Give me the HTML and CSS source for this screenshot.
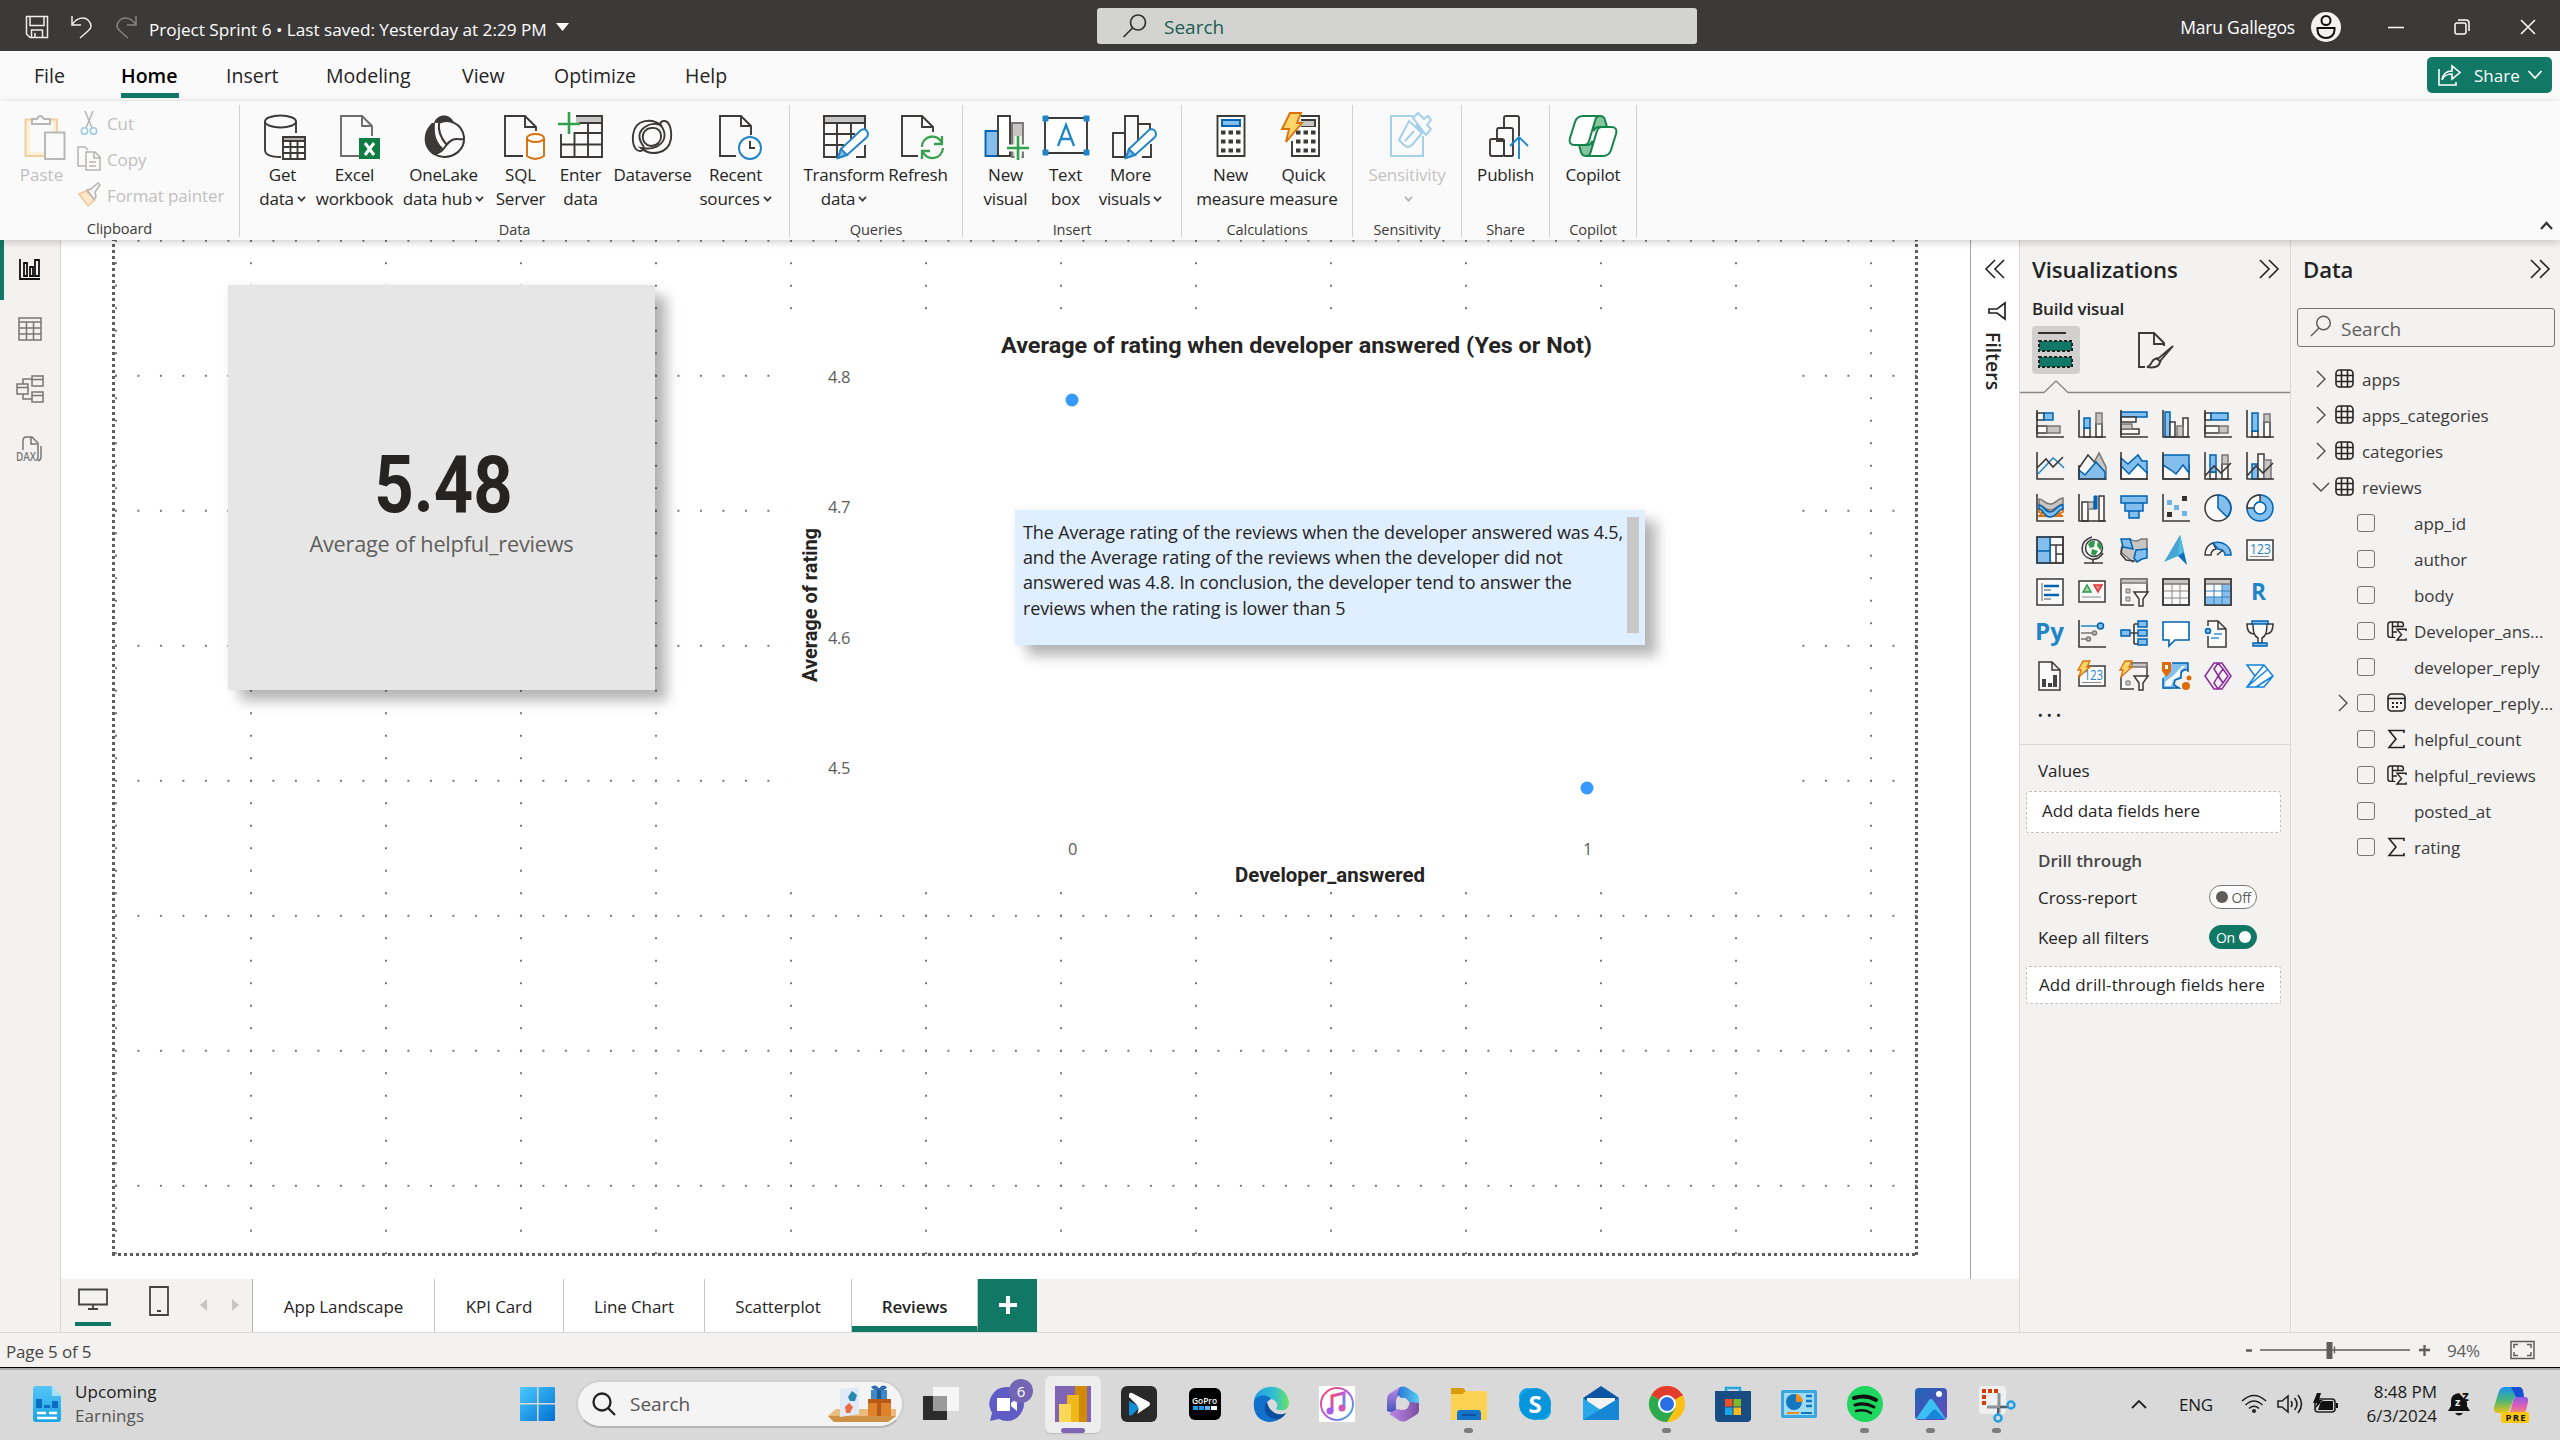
FILE: index.html
```html
<!DOCTYPE html>
<html lang="en">
<head>
<meta charset="utf-8">
<title>Project Sprint 6</title>
<link rel="stylesheet" href="styles.css">
</head>
<body>
<header class="titlebar">
  <div class="title-left">
    <svg width="24" height="24" viewBox="0 0 24 24" class="tl"><path d="M1.500 1.500h21v21H5l-3.500-3.500zM5 1.500v9h14v-9M6.500 22v-7h11v7M10 22v-4"/></svg>
    <svg width="24" height="24" viewBox="0 0 24 24" class="tl"><path d="M2 1v9h9M2 10C6 3 14 1 18 5s4 8 0 11l-8 7"/></svg>
    <svg width="24" height="24" viewBox="0 0 24 24" class="tl dim"><path d="M21 1v9h-9M21 10C17 3 9 1 5 5s-4 8 0 11l8 7"/></svg>
    <span class="doc">Project Sprint 6 • Last saved: Yesterday at 2:29 PM</span>
    <svg width="14" height="9" viewBox="0 0 14 9"><path d="M0 0h13L6.500 8z" fill="#fff"/></svg>
  </div>
  <div class="top-search">
    <svg width="26" height="26" viewBox="0 0 26 26" fill="none" stroke="#333" stroke-width="1.700"><circle cx="16" cy="9.500" r="7.500"/><path d="M10.500 15 1.500 24"/></svg>
    <span>Search</span>
  </div>
  <div class="title-right">
    <span class="user">Maru Gallegos</span>
    <svg width="30" height="30" viewBox="0 0 30 30"><circle cx="15" cy="15" r="15" fill="#f3f2f1"/><g fill="none" stroke="#111" stroke-width="2"><circle cx="15" cy="8.500" r="4.500"/><path d="M6.500 16h17v2c0 5-4 8-8.500 8s-8.500-3-8.500-8z"/></g></svg>
    <svg class="wb" width="16" height="16" viewBox="0 0 16 16"><path d="M0 8.500h16"/></svg>
    <svg class="wb" width="16" height="16" viewBox="0 0 16 16"><rect x="1" y="4" width="11" height="11" rx="2"/><path d="M4 1h8q3 0 3 3v8"/></svg>
    <svg class="wb" width="16" height="16" viewBox="0 0 16 16"><path d="m1 1 14 14M15 1 1 15"/></svg>
  </div>
</header>

<nav class="tabs">
  <span class="w1">File</span><span class="w2 active">Home</span><span class="w3">Insert</span><span class="w4">Modeling</span><span class="w5">View</span><span class="w6">Optimize</span><span class="w7">Help</span>
  <button class="share">
    <svg width="24" height="22" viewBox="0 0 24 22" fill="none" stroke="#fff" stroke-width="1.600"><path d="M1 5v16h17v-3M4 16c1-7 5-9 10-9V2l8 6.500-8 6.500v-5c-5 0-8 1-10 6z"/></svg>
    <span>Share</span>
    <svg width="16" height="10" viewBox="0 0 16 10" fill="none" stroke="#fff" stroke-width="1.700"><path d="m1.500 1 6.500 7 6.500-7"/></svg>
  </button>
</nav>

<section class="ribbon">
  <div class="group g-clip">
    <div class="clip">
      <div class="paste">
        <svg width="42" height="46" viewBox="0 0 42 46"><path d="M1.500 5.500H33V42H1.500z" fill="#fdf0d6" stroke="#f2cfa0" stroke-width="2"/><path d="M6 9h23v29H6z" fill="#fafafa"/><path d="M8 10V5h5q3-6 7 0h6v5z" fill="#fafafa" stroke="#b8b7b6" stroke-width="2"/><path d="M21 18.500h19.500V45H21z" fill="#fafafa" stroke="#b8b7b6" stroke-width="2"/></svg>
        <span>Paste</span>
      </div>
      <div class="clip-list">
        <div><svg width="24" height="26" viewBox="0 0 24 26" fill="none" stroke="#b5b4b3" stroke-width="1.500"><path d="m8 1 7 17M16 1 9 18"/><circle cx="7.500" cy="21" r="3.200" stroke="#9cc8e8"/><circle cx="16.500" cy="21" r="3.200" stroke="#9cc8e8"/></svg><span>Cut</span></div>
        <div><svg width="24" height="26" viewBox="0 0 24 26" fill="none" stroke="#b5b4b3" stroke-width="1.500"><path d="M8 20H1V1h7l3 3M9 6h9l5 5v13H9zM17 6v6h6M12 16h7M12 20h7"/></svg><span>Copy</span></div>
        <div><svg width="24" height="26" viewBox="0 0 24 26" fill="none" stroke-width="1.500"><path d="m2 12 7-3 9 9-7 6z" fill="#fde8cb" stroke="#f0c795"/><path d="m10 8 4-1 7-6 2 2-5 7 1 5-2 2z" stroke="#b5b4b3"/></svg><span>Format painter</span></div>
      </div>
    </div>
    <span class="glabel">Clipboard</span>
  </div>

  <div class="group g-data">
    <div class="btns">
      <div class="btn w60"><svg width="46" height="46" viewBox="0 0 46 46" class="k"><path d="M5 7v29c0 4 5 7 16 7M36 7v12"/><ellipse cx="20.500" cy="7.500" rx="15.500" ry="6"/><path d="M23 23h22v22H23z" fill="#fff"/><path d="M23 23h22v4H23z" fill="#b3b0ad"/><path d="M30.500 27v18M37.500 27v18M23 33h22M23 39h22"/></svg><span>Get<br>data<i></i></span></div>
      <div class="btn w84"><svg width="42" height="46" viewBox="-5 0 42 46" class="k"><path d="M21 42H2V2h21l10 10v10M23 2v10h10" stroke="#6d6b69"/><rect x="20" y="24" width="21" height="21" fill="#107c41" stroke="none"/><path d="m26 29 9 12M35 29l-9 12" stroke="#fff" stroke-width="3"/></svg><span>Excel<br>workbook</span></div>
      <div class="btn w94"><svg width="44" height="46" viewBox="0 0 44 46"><path d="M12 9C15-1 29-1 32 9Q26 6 22 7.500T12 9z" fill="#3b3a39"/><path d="M10 9C0 18 0 34 12 41q6-2 9-7C14 28 12 20 13 9z" fill="#3b3a39"/><g fill="none" stroke="#3b3a39" stroke-width="2"><path d="M17 9c9-5 23 0 25 14C43 36 32 43 22 43c-5 0-10-3-10-3 12-2 10-10 18-14 5-2 8 0 12-1M17 9c-1 8 2 15 7 21"/></g></svg><span>OneLake<br>data hub<i></i></span></div>
      <div class="btn w60"><svg width="44" height="46" viewBox="-2 0 44 46" class="k"><path d="M22 42H4V2h20l11 11v4M24 2v11h11"/><path d="M26 24v18q8 6 17 0V24" fill="#fff" stroke="#d96f0a"/><ellipse cx="34.500" cy="24" rx="8.500" ry="4" fill="#fff" stroke="#d96f0a"/></svg><span>SQL<br>Server</span></div>
      <div class="btn w60"><svg width="46" height="46" viewBox="1 0 46 46" class="k"><path d="M19 2h25v7H19z" fill="#c8c6c4" stroke="none"/><path d="M19 2h26v41H4V20M22 9h23M4 30.500h41M17.500 18v25M31 9v34M17 19h28"/><path d="M12-2v22M1 10h22" stroke="#30a14e" stroke-width="2.600"/></svg><span>Enter<br>data</span></div>
      <div class="btn w84"><svg width="44" height="46" viewBox="1 0 44 46" class="k"><path d="M21 14C35 12 34 32 21 32 10 31 10 15 21 14zM32 12c-9-8-27-8-29 9-1 11 3 16 7 16s5-4 2-7c-5-8-2-14 3-17 5-4 12-4 17-1z"/><path d="M11 34c9 8 27 7 30-9 1-11-2-18-7-18-4 0-5 4-2 6 5 8 2 15-3 18-5 4-12 4-18 3z"/></svg><span>Dataverse</span></div>
      <div class="btn w82"><svg width="44" height="46" viewBox="-4 0 44 46" class="k"><path d="M18 42H2V2h21l10 10v9M23 2v10h10"/><circle cx="32" cy="34" r="11" fill="#fff" stroke="#1f84c8"/><path d="M32 27v7h5"/></svg><span>Recent<br>sources<i></i></span></div>
    </div>
    <span class="glabel">Data</span>
  </div>

  <div class="group g-query">
    <div class="btns">
      <div class="btn w82"><svg width="46" height="46" viewBox="-1 0 46 46" class="k"><path d="M2 2h41v7H2z" fill="#c8c6c4"/><path d="M15 43H2V2h41v14M2 20h31M2 31h20M15 9v34M29 9v17M34 43h9V31"/><path d="m16 44 3-9 20-19q4-2 6 1t0 6L25 41z" fill="#fff" stroke="#1f84c8"/><path d="m16 44 3-9 6 6z" fill="#83beec" stroke="#1f84c8"/></svg><span>Transform<br>data<i></i></span></div>
      <div class="btn w66"><svg width="44" height="46" viewBox="-4 0 44 46" class="k"><path d="M18 42H2V2h20l11 11v5M22 2v11h11"/><g stroke="#36a04f" stroke-width="2.300"><path d="M22 33c0-12 16-14 20-4M42 22v8h-8M43 34c-1 12-16 13-20 4M22 45v-8h8"/></g></svg><span>Refresh</span></div>
    </div>
    <span class="glabel">Queries</span>
  </div>

  <div class="group g-insert">
    <div class="btns">
      <div class="btn w60"><svg width="46" height="46" viewBox="-1 0 46 46" class="k"><path d="M28 9h11v34H28z" fill="#c8c6c4" stroke="#797775"/><path d="M1.500 17H15v25H1.500z" fill="#83beec" stroke="#0063b1"/><path d="M14 2h12v40H14z" fill="#fff"/><path d="M34 22v24M23 34h22" stroke="#fafafa" stroke-width="7"/><path d="M34 22v24M23 34h22" stroke="#30a14e" stroke-width="2.600"/></svg><span>New<br>visual</span></div>
      <div class="btn w60"><svg width="48" height="46" viewBox="0 0 48 46" class="k"><path d="M3 4h42v35H3z" fill="#fff"/><path d="M1 2h5v5H1zM42 2h5v5h-5zM1 36h5v5H1zM42 36h5v5h-5z" fill="#1f84c8" stroke="#1f84c8" stroke-width="1"/><path d="m16 32 8-21 8 21M19 25h10" stroke="#1f84c8" stroke-width="2.300"/></svg><span>Text<br>box</span></div>
      <div class="btn w70"><svg width="46" height="46" viewBox="-3 0 46 46" class="k"><path d="M2 19h12v24H2z"/><path d="M14 43V2h13v26M27 10h12v9M31 43h9V30" /><path d="m15 44 3-9 20-19q4-2 6 1t0 6L24 41z" fill="#fff" stroke="#1f84c8"/><path d="m15 44 3-9 6 6z" fill="#83beec" stroke="#1f84c8"/></svg><span>More<br>visuals<i></i></span></div>
    </div>
    <span class="glabel">Insert</span>
  </div>

  <div class="group g-calc">
    <div class="btns">
      <div class="btn w72"><svg width="30" height="46" viewBox="0 0 30 46" class="k"><path d="M1.500 2h27v40h-27z" fill="#fff"/><path d="M6 6h18v6H6z" fill="#83beec" stroke="#0063b1"/><path d="M5 18.500h20M5 27.500h20M5 36.500h20" stroke-width="4" stroke-dasharray="4.500 3"/></svg><span>New<br>measure</span></div>
      <div class="btn w74"><svg width="46" height="46" viewBox="0 0 46 46" class="k"><path d="M20 2h18v40H11V27M20 6h14v6H20" fill="#fff"/><path d="M18 7h15v5H18z" fill="#c8c6c4" stroke="none"/><path d="M15 18.500h20M15 27.500h20M15 36.500h20" stroke-width="4" stroke-dasharray="4.500 3"/><path d="M9-1h11l-4 10h5L5 28l3-13H1z" fill="#fdd36a" stroke="#d9720b"/></svg><span>Quick<br>measure</span></div>
    </div>
    <span class="glabel">Calculations</span>
  </div>

  <div class="group g-sens">
    <div class="btns">
      <div class="btn w90 off"><svg width="46" height="46" viewBox="-3 0 46 46" fill="none" stroke="#a5d0ea" stroke-width="2"><path d="M26 2H4v40h32V22"/><path d="m22 7 13 12-10 12q-4 4-8 0l-5-5zM26 4l5-5 6 6 4-3 3 4-4 5 4 4-5 6zM18 27l9-10M29 11l9 9" /></svg><span>Sensitivity<br><i></i></span></div>
    </div>
    <span class="glabel">Sensitivity</span>
  </div>
  <div class="group g-share">
    <div class="btns">
      <div class="btn w70"><svg width="46" height="46" viewBox="-4 0 46 46" class="k"><rect x="3" y="25" width="14" height="17" rx="2"/><path d="M17 42V27H10V16q0-2 2-2h12q2 0 2 2v26M17 14V4q0-2 2-2h11q2 0 2 2v18M17 42h9"/><path d="M32 45V23M23 32l9-9 9 9" stroke="#1f84c8"/></svg><span>Publish</span></div>
    </div>
    <span class="glabel">Share</span>
  </div>
  <div class="group g-cop">
    <div class="btns">
      <div class="btn w70"><svg width="50" height="46" viewBox="0 0 50 46" fill="#fff" stroke="#13854a" stroke-width="2"><path d="M24 2h8q4 0 5 4l2 7h-8q-4 0-5 4zM26 42h-8q-4 0-5-4l-2-7h8q4 0 5-4z" fill="#86c4a0"/><path d="M32 2H15Q9 2 7 8L2 24q-2 7 5 7h9q4 0 5-4l6-20q1-5 5-5z"/><path d="M18 42h17q6 0 8-6l5-16q2-7-5-7h-9q-4 0-5 4l-6 20q-1 5-5 5z"/></svg><span>Copilot</span></div>
    </div>
    <span class="glabel">Copilot</span>
  </div>
  <svg class="collapse" width="13" height="9" viewBox="0 0 13 9"><path d="m1 8 5.500-6L12 8" fill="none" stroke="#333" stroke-width="2.200"/></svg>
</section>

<main class="work">
  <aside class="rail">
    <div class="rail-item on"><svg width="24" height="24" viewBox="0 0 24 24" fill="none" stroke="#111" stroke-width="1.800"><path d="M2 2v20h20M6 19V6h3v13zM12 19v-9h3v9zM17 19V3h4v16z"/></svg></div>
    <div class="rail-item"><svg width="26" height="26" viewBox="0 0 26 26"><path d="M2 2h22v22H2zM2 6h22M2 12h22M2 18h22M9.500 6v18M16.500 6v18"/></svg></div>
    <div class="rail-item"><svg width="28" height="30" viewBox="0 0 28 30"><path d="M1 10h11v10H1zM1 13.500h11M16 2h11v10H16zM16 5.500h11M16 18h11v10H16zM16 21.500h11M7 10V5h9M7 20v5h9"/></svg></div>
    <div class="rail-item"><svg width="28" height="28" viewBox="0 0 28 28"><path d="M7 15V6q0-4 3-4h6l6 6v14q0 3-2 3M15 2v7h6M25 11v11q0 3-3 4"/><text x="0" y="26" textLength="20" lengthAdjust="spacingAndGlyphs">DAX</text></svg></div>
  </aside>

  <section class="center">
    <div class="stage">
      <div class="page">
        <div class="card"><b>5.48</b><span>Average of helpful_reviews</span></div>
        <svg class="scatter" width="1012" height="572" viewBox="790 318 1012 572">
          <g class="din">
            <text x="1001" y="353" font-size="21.500" textLength="591" lengthAdjust="spacingAndGlyphs">Average of rating when developer answered (Yes or Not)</text>
            <text x="1235" y="882" font-size="20" textLength="190" lengthAdjust="spacingAndGlyphs">Developer_answered</text>
            <text transform="translate(817 682) rotate(-90)" font-size="20" textLength="154" lengthAdjust="spacingAndGlyphs">Average of rating</text>
          </g>
          <g class="tick">
            <text x="828" y="383">4.8</text><text x="828" y="513">4.7</text><text x="828" y="644">4.6</text><text x="828" y="774">4.5</text>
            <text x="1068" y="855">0</text><text x="1583" y="855">1</text>
          </g>
          <circle cx="1072" cy="400" r="6.500" fill="#3599ff"/><circle cx="1587" cy="788" r="6.500" fill="#3599ff"/>
        </svg>
        <div class="note"><p>The Average rating of the reviews when the developer answered was 4.5,<br>and the Average rating of the reviews when the developer did not<br>answered was 4.8. In conclusion, the developer tend to answer the<br>reviews when the rating is lower than 5</p><div class="thumb"></div></div>
      </div>
    </div>
    <aside class="filters">
      <svg width="20" height="20" viewBox="0 0 20 20" class="chev"><path d="m10 1-9 9 9 9M19 1l-9 9 9 9"/></svg>
      <svg class="funnel" width="18" height="18" viewBox="0 0 18 18"><path d="M17 1v16l-8-6H1V7h8z" fill="none" stroke="#222" stroke-width="1.700"/></svg>
      <span>Filters</span>
    </aside>
    <footer class="pagebar">
      <div class="views">
        <svg width="30" height="24" viewBox="0 0 30 24"><path d="M1 2h28v15H1zM15 17v4M10 21.500h10"/></svg>
        <svg width="20" height="32" viewBox="0 0 20 32"><path d="M1 2h18v28H1zM8 26h4"/></svg>
        <b class="tri l"></b><b class="tri r"></b>
      </div>
      <span class="pt p1">App Landscape</span><span class="pt p2">KPI Card</span><span class="pt p3">Line Chart</span><span class="pt p4">Scatterplot</span><span class="pt p5">Reviews</span>
      <span class="plus"><svg width="18" height="18" viewBox="0 0 18 18"><path d="M9 0v18M0 9h18" stroke="#fff" stroke-width="4"/></svg></span>
    </footer>
  </section>

  <aside class="viz">
    <div class="phead"><h2>Visualizations</h2><svg width="20" height="20" viewBox="0 0 20 20" class="chev"><path d="m1 1 9 9-9 9M10 1l9 9-9 9"/></svg></div>
    <h3>Build visual</h3>
    <div class="modes">
      <span class="mode"><svg width="36" height="38" viewBox="0 0 36 38"><path d="M0 2h28" stroke="#222" stroke-width="1.800"/><path d="M1 10h33v10H1zM1 26h33v10H1z" fill="#117865" stroke="#222" stroke-width="2" stroke-dasharray="3 2"/></svg></span>
      <svg width="38" height="38" viewBox="0 0 38 38" class="k"><path d="M8 36H2V2h15l10 10v3M17 2v11h10" /><path d="M36 15 22 27l-4 1c-4 1-3 7-8 8 6 1 12 0 13-5l1-2z"/><path d="m19 27 5 4"/></svg>
    </div>
    <svg class="notch" width="270" height="14" viewBox="0 0 270 14"><path d="M0 12.500h24L36 1l12 11.500h222" fill="none" stroke="#8a8886" stroke-width="1.300"/></svg>

    <div class="vgrid">
      <svg viewBox="0 0 28 28"><path class="w" d="M1 3h7v7H1zM1 16h10v7H1z"/><path class="b" d="M8 3h9v7H8z"/><path class="g" d="M11 16h13v7H11z"/><path class="x" d="M1 0v27h27"/></svg>
      <svg viewBox="0 0 28 28"><path class="w" d="M6 18h6v9H6zM18 13h6v14h-6z"/><path class="b" d="M6 8h6v10H6z"/><path class="g" d="M18 3h6v11h-6z"/><path class="x" d="M1 0v27h27"/></svg>
      <svg viewBox="0 0 28 28"><path class="b" d="M1 2h26v5H1z"/><path class="w" d="M1 7h15v5H1zM1 19h18v5H1z"/><path class="g" d="M1 14h11v5H1z"/><path class="x" d="M1 0v27h27"/></svg>
      <svg viewBox="0 0 28 28"><path class="b" d="M3 2h5v25H3z"/><path class="w" d="M8 12h5v15H8zM21 8h5v19h-5z"/><path class="g" d="M15 16h6v11h-6z"/><path class="x" d="M1 0v27h27"/></svg>
      <svg viewBox="0 0 28 28"><path class="w" d="M1 3h6v7H1zM1 16h14v7H1z"/><path class="b" d="M7 3h17v7H7z"/><path class="g" d="M15 16h9v7h-9z"/><path class="x" d="M1 0v27h27"/></svg>
      <svg viewBox="0 0 28 28"><path class="w" d="M6 21h6v6H6zM18 12h6v15h-6z"/><path class="b" d="M6 3h6v18H6z"/><path class="g" d="M18 4h6v8h-6z"/><path class="x" d="M1 0v27h27"/></svg>

      <svg viewBox="0 0 28 28"><path class="bl" d="m2 22 15-16 5 4 6 6"/><path class="x" d="m1 16 9-9 7 8 10-10M1 0v27h27"/></svg>
      <svg viewBox="0 0 28 28"><path class="g" d="M13 16 21 1l7 14v12z"/><path class="w" d="m1 16 9-13 9 10-12 13H1z"/><path class="b" d="m1 18 6 5 11-13 9 10v7H1z"/><path class="x" d="M1 13v14h27"/></svg>
      <svg viewBox="0 0 28 28"><path class="w" d="m1 12 7 8 10-8 9 8v7H1z" stroke="none"/><path class="b" d="m1 6 7 6 10-9 4 6h5v12l-9-9-9 10-8-8z"/><path class="x" d="M1 0v27h27"/></svg>
      <svg viewBox="0 0 28 28"><path class="w" d="M1 12h26v15H1z" stroke="none"/><path class="b" d="M1 3h26v18l-6-8-7 9-5-4-8-5z"/><path class="x" d="M1 0v27h27"/></svg>
      <svg viewBox="0 0 28 28"><path class="w" d="M6 20h6v7H6zM18 12h6v15h-6z"/><path class="b" d="M6 3h6v17H6z"/><path class="g" d="M18 3h6v9h-6z"/><path class="x" d="m1 24 9-10 7 7 10-10M1 0v27h27"/></svg>
      <svg viewBox="0 0 28 28"><path class="b" d="M6 12h6v15H6z"/><path class="w" d="M12 2h6v25h-6z"/><path class="g" d="M18 8h7v19h-7z"/><path class="x" d="m1 24 9-10 7 7 10-10M1 0v27h27"/></svg>

      <svg viewBox="0 0 28 28"><path d="M3 15h6l5 3 6-3h7v3l-5 2 5 2H3l4-3-4-1z" fill="#fbd39a" stroke="#e0700a" stroke-width="1.800"/><path class="g" d="M3 5c5 0 5 5 11 5s8-6 13-6v6c-5 0-7 6-13 6S8 11 3 11z"/><path class="b" d="M3 11c5 0 5 7 11 7s6-7 13-7v4c-5 0-6 8-13 8S8 15 3 15z"/><path class="x" d="M1 0v27h27"/></svg>
      <svg viewBox="0 0 28 28"><path class="w" d="M4 8h6v19H4zM21 2h5v25h-5z"/><path class="g" d="M10 8h6v7h-6z"/><path d="M16 2h3v13h-3z" fill="#0063b1" stroke="#0063b1"/><path class="x" d="M1 0v27h27"/></svg>
      <svg viewBox="0 0 28 28"><path class="b" d="M1 2h26v7H1zM5 9h18v8H5zM9 17h10v7H9z"/></svg>
      <svg viewBox="0 0 28 28"><path fill="#6db3ea" d="M5 6h5v5H5zM12 11h5v5h-5zM20 17h5v5h-5z"/><path fill="#333" d="M20 2h5v5h-5zM5 18h5v5H5z"/><path class="x" d="M1 0v27h27"/></svg>
      <svg viewBox="0 0 28 28"><circle class="w" cx="14" cy="14" r="13"/><path class="b" d="M14 1a13 13 0 0 1 9 22l-9-9z"/></svg>
      <svg viewBox="0 0 28 28"><circle class="b" cx="14" cy="14" r="13"/><path class="w" stroke="#797775" d="M1 14A13 13 0 0 1 14 1v7a6 6 0 0 0-6 6z"/><circle cx="14" cy="14" r="6" fill="#f8f8f8" stroke="#0063b1" stroke-width="1.500"/></svg>

      <svg viewBox="0 0 28 28"><path class="w" d="M14 1h13v26H14zM14 9h13M20 9v18M20 18h7"/><path class="b" d="M1 1h13v26H1zM1 15h13"/><path class="x" d="M1 1h26v26H1z"/></svg>
      <svg viewBox="0 0 28 28"><path class="x" d="M14 1C1 5 1 20 13 23c5 1 9-1 12-6M6 27h19M15 23v4"/><circle class="w" cx="16" cy="12" r="8.500"/><path d="M10 8q3-4 7-3l-1 6-4 1zM14 13l6 2-3 5-4-2zM20 5l4 5-1 5-4-5z" fill="#2e9a4b"/></svg>
      <svg viewBox="0 0 28 28"><path class="g" d="M10 3q6 4 11 0h6v11l-5 8-9 4-5-4-7-6 1-6h9z"/><path class="b" d="M1 3h9l3 10-5-1-5-1zM16 14l11-1v9l-5 1-5 3-3-4z"/><path class="x" d="m2 11-1 7 5 6 8 1"/></svg>
      <svg viewBox="0 0 28 28"><path d="M18-1 2 26l14-6z" fill="#45a6d6"/><path d="m18-1 7 30-9-9z" fill="#0a6ebd"/><path d="m18-1 4 17-6 4z" fill="#54bde0"/></svg>
      <svg viewBox="0 0 28 28"><path class="w" d="M1 19C1 12 5 8 9 7l3 6q-5 1-5 6z"/><path class="b" d="M9 7c9-3 18 3 18 12h-6q0-5-7-6z"/><path class="x" d="m13 19 6-5" stroke-width="3"/></svg>
      <svg viewBox="0 0 28 28"><path class="w" d="M1 4h26v20H1z"/><path d="M4 20.500h19" stroke="#888"/><text x="4" y="18" font-size="14" textLength="21" lengthAdjust="spacingAndGlyphs">123</text></svg>

      <svg viewBox="0 0 28 28"><path class="w" d="M1 1h26v26H1z"/><path d="M6 5v18M8 12h7M8 21h7" stroke="#888" stroke-width="1.300"/><path d="M8 8h15M8 17h15" stroke="#0063b1" stroke-width="2.500"/></svg>
      <svg viewBox="0 0 28 28"><path class="w" d="M1 3h26v21H1z"/><path d="m5 14 4-7 4 7z" fill="#9cd5a5" stroke="#2e9a4b" stroke-width="1.500"/><path d="m16 7 4 7 4-7z" fill="#ee8080" stroke="#d33" stroke-width="1.500"/><path d="M4 19h19" stroke="#888"/></svg>
      <svg viewBox="0 0 28 28"><path class="w" d="M1 1h26v13M14 27H1V1"/><path class="g" d="M1 1h26v4H1z"/><path d="M6 11h4v4H6zM6 19h4v4H6z" fill="#ccc" stroke="#777"/><path class="w" d="M14 14h14l-5 7v7h-4v-7z"/></svg>
      <svg viewBox="0 0 28 28"><path class="w" d="M1 1h26v26H1z"/><path class="g" d="M1 1h26v5H1z"/><path d="M10 6v21M18 6v21M1 13h26M1 20h26" stroke="#888"/><path class="x" d="M1 1h26v26H1z"/></svg>
      <svg viewBox="0 0 28 28"><path class="w" d="M1 1h26v26H1z"/><path fill="#83beec" d="M18 6h9v21H1v-8h17z"/><path d="M10 6v21M18 6v21M1 13h26M1 19h26" stroke="#3a83bd"/><path class="g" d="M1 1h26v5H1z"/><path class="x" d="M1 1h26v26H1z"/></svg>
      <svg viewBox="0 0 28 28"><text x="5" y="22" font-size="24" font-weight="700" textLength="15" lengthAdjust="spacingAndGlyphs">R</text></svg>

      <svg viewBox="0 0 28 28"><text x="-1" y="20" font-size="24" font-weight="700" textLength="29" lengthAdjust="spacingAndGlyphs">Py</text></svg>
      <svg viewBox="0 0 28 28"><path class="bl" d="M3 6h16"/><circle class="b" cx="22.500" cy="6" r="3"/><path d="M3 13h11M3 19h6" stroke="#797775" stroke-width="1.500"/><circle class="g" cx="16.500" cy="13" r="2"/><circle class="g" cx="10.500" cy="19" r="2"/><path class="x" d="M1 0v27h27"/></svg>
      <svg viewBox="0 0 28 28"><path class="x" d="M9 13h9M14 4v20M14 4h4M14 24h4"/><path class="b" d="M1 10h9v6H1zM18 1h9v6h-9zM18 10h9v6h-9zM18 19h9v6h-9z"/></svg>
      <svg viewBox="0 0 28 28"><path d="M1 2h26v18H13l-6 6v-6H1z" fill="#fff" stroke="#0063b1" stroke-width="1.600"/></svg>
      <svg viewBox="0 0 28 28"><path class="w" d="M4 6V1h10l8 8v18H4V16M14 1v8h8"/><circle class="b" cx="4" cy="11" r="2.500"/><path d="M10 14h8M7 18h8" stroke="#3a93d5" stroke-width="1.500"/></svg>
      <svg viewBox="0 0 28 28"><path class="x" d="M7 4H1c0 7 3 10 7 10M21 4h6c0 7-3 10-7 10"/><path class="w" d="M7 2h14c0 10-1 14-5 16v5h-4v-5C8 16 7 12 7 2z"/><path class="b" d="M6 1h16v3H6zM7 23h14v3H7z"/></svg>

      <svg viewBox="0 0 28 28"><path class="w" d="M3 0h13l8 8v20H3zM16 0v8h8"/><path fill="#444" d="M6 17h4v8H6zM12 21h4v4h-4zM17 13h4v12h-4z"/></svg>
      <svg viewBox="0 0 28 28"><path class="w" d="M10 4h17v20H1V13"/><path d="M4 20.500h19" stroke="#888"/><text x="6" y="18" font-size="14" textLength="19" lengthAdjust="spacingAndGlyphs">123</text><path class="o" d="M5-1h7L9 5h3L1 15l2-7H0z"/></svg>
      <svg viewBox="0 0 28 28"><path class="w" d="M9 1h18v13M14 27H1V15"/><path class="g" d="M12 1h15v4H12z"/><path d="M6 19h4v4H6z" fill="#ccc" stroke="#777"/><path class="w" d="M14 14h14l-5 7v7h-4v-7z"/><path class="o" d="M5-1h7L9 5h3L1 15l2-7H0z"/></svg>
      <svg viewBox="0 0 28 28"><path d="M1 16h8v11H1z" fill="#83beec"/><path d="M10 1h16v7q-6-1-7 4v4l-6 2-1 5 5 3H1V16M26 1v9" fill="#83beec" stroke="#0063b1" stroke-width="1.500"/><path d="m3 20 9-7 8-9h4l-6 4v6l-7 4-2 6H3z" fill="#f7fafd"/><path d="M0 0h9v9l-4.500 6L0 9z" fill="#df6b05"/><rect x="3" y="3" width="3" height="4" fill="#fff"/><circle cx="24" cy="24" r="4" fill="#df6b05"/><circle cx="27" cy="16" r="2.500" fill="#df6b05"/></svg>
      <svg viewBox="0 0 28 28" fill="none" stroke="#8b2a9b" stroke-width="1.500"><path d="M10 1h4l5 6-5 7 5 7-5 6h-4L1 14zM14 1h4l9 13-9 13h-4M19 7l5 7-5 7M14 14l5-7M14 14l5 7M14 1l-4 6 9 14M14 27l-4-6 4-7"/></svg>
      <svg viewBox="0 0 28 28" fill="#fff" stroke="#1182dd" stroke-width="1.500"><path d="M1 3h17l9 11-9 11H1l8-11zM9 14 18 3M2 24 21 8M10 25 27 14" /></svg>
      <b class="dots">...</b>
    </div>

    <div class="wells">
      <p class="wl">Values</p>
      <div class="drop d1">Add data fields here</div>
      <p class="wl strong">Drill through</p>
      <div class="trow">Cross-report<span class="toggle"><i></i>Off</span></div>
      <div class="trow">Keep all filters<span class="toggle on">On<i></i></span></div>
      <div class="drop d2">Add drill-through fields here</div>
    </div>
  </aside>

  <aside class="data">
    <div class="phead"><h2>Data</h2><svg width="20" height="20" viewBox="0 0 20 20" class="chev"><path d="m1 1 9 9-9 9M10 1l9 9-9 9"/></svg></div>
    <div class="dsearch"><svg width="22" height="22" viewBox="0 0 22 22" fill="none" stroke="#605e5c" stroke-width="1.500"><circle cx="13.500" cy="8" r="6.800"/><path d="M9 13 1 21"/></svg><span>Search</span></div>
    <svg class="defs" width="0" height="0">
      <symbol id="tbl" viewBox="0 0 20 20"><rect x="1" y="1" width="17" height="17" rx="3.500"/><path d="M6.500 1v17M12.500 1v17M1 6.500h17M1 12.500h17"/></symbol>
      <symbol id="sum" viewBox="0 0 20 20"><path d="M17 4V1.500H2l7 8.500-7 8.500h15V16"/></symbol>
      <symbol id="msr" viewBox="0 0 22 22"><path d="M9 18H4q-3 0-3-3V4q0-3 3-3h11q3 0 3 3v2M6 1v17M12 1v6M6 6h12M6 12h5M21 11v-2H11l5 6-5 6h10v-2"/></symbol>
      <symbol id="cal" viewBox="0 0 20 20"><rect x="1" y="1" width="17" height="17" rx="3.500"/><path d="M1 5.500h17"/><path d="M5 10h2M9 10h2M13 10h2M5 14h2M9 14h2" stroke-width="2"/></symbol>
    </svg>
    <div class="tree">
      <div class="row"><svg class="car" viewBox="0 0 10 18"><path d="m1 1 8 8-8 8"/></svg><svg class="ic"><use href="#tbl"/></svg>apps</div>
      <div class="row"><svg class="car" viewBox="0 0 10 18"><path d="m1 1 8 8-8 8"/></svg><svg class="ic"><use href="#tbl"/></svg>apps_categories</div>
      <div class="row"><svg class="car" viewBox="0 0 10 18"><path d="m1 1 8 8-8 8"/></svg><svg class="ic"><use href="#tbl"/></svg>categories</div>
      <div class="row"><svg class="car open" viewBox="0 0 18 10"><path d="m1 1 8 8 8-8"/></svg><svg class="ic"><use href="#tbl"/></svg>reviews</div>
      <div class="row f"><i class="cb"></i><svg class="ic"></svg>app_id</div>
      <div class="row f"><i class="cb"></i><svg class="ic"></svg>author</div>
      <div class="row f"><i class="cb"></i><svg class="ic"></svg>body</div>
      <div class="row f"><i class="cb"></i><svg class="ic"><use href="#msr"/></svg>Developer_ans...</div>
      <div class="row f"><i class="cb"></i><svg class="ic"></svg>developer_reply</div>
      <div class="row f x2"><svg class="car" viewBox="0 0 10 18"><path d="m1 1 8 8-8 8"/></svg><i class="cb"></i><svg class="ic"><use href="#cal"/></svg>developer_reply...</div>
      <div class="row f"><i class="cb"></i><svg class="ic"><use href="#sum"/></svg>helpful_count</div>
      <div class="row f"><i class="cb"></i><svg class="ic"><use href="#msr"/></svg>helpful_reviews</div>
      <div class="row f"><i class="cb"></i><svg class="ic"></svg>posted_at</div>
      <div class="row f"><i class="cb"></i><svg class="ic"><use href="#sum"/></svg>rating</div>
    </div>
  </aside>
</main>

<div class="status">
  <span>Page 5 of 5</span>
  <div class="zoom">
    <svg width="184" height="20" viewBox="0 0 184 20"><path d="M0 10.500h6M173 10h11M178.500 5v11" stroke="#605e5c" stroke-width="2.300"/><path d="M14 10h150M88.500 6.500v7" stroke="#605e5c" stroke-width="1.300"/><path d="M80.500 2h6v17h-6z" fill="#605e5c"/></svg>
    <span>94%</span>
    <svg width="26" height="20" viewBox="0 0 26 20" fill="none" stroke="#605e5c" stroke-width="1.500"><path d="M1 1.500h23v17H1zM4 8V4.500h4M17 4.500h4V8M21 12v3.500h-4M8 15.500H4V12"/></svg>
  </div>
</div>

<footer class="taskbar">
  <div class="weather">
    <svg width="28" height="36" viewBox="0 0 28 36"><defs><linearGradient id="wg" x2="0" y2="1"><stop stop-color="#55c4f8"/><stop offset="1" stop-color="#1ba4e2"/></linearGradient></defs><path d="M3 0h16l9 10v23q0 3-3 3H3q-3 0-3-3V3q0-3 3-3z" fill="url(#wg)"/><path d="m19 0 9 10h-9z" fill="#a5e0fc"/><path d="M3 13h6v9H3zM11 19h6v3h-6zM19 15h6v7h-6z" fill="#0a6cc2"/><path d="M4 27h9M16 27h8M4 32h20" stroke="#fff" stroke-width="2.500"/></svg>
    <p>Upcoming<br><span>Earnings</span></p>
  </div>
  <svg class="start" width="36" height="36" viewBox="0 0 36 36"><defs><linearGradient id="sg" x2="1" y2="1"><stop stop-color="#4ccbff"/><stop offset="1" stop-color="#006fd2"/></linearGradient></defs><path d="M0 2q0-1 1-1h16v16H0zM18.500 1H34q1 0 1 1v15H18.500zM0 18.500h17V35H1q-1 0-1-1zM18.500 18.500H35V34q0 1-1 1H18.500z" fill="url(#sg)"/></svg>
  <div class="tsearch">
    <svg width="24" height="24" viewBox="0 0 24 24" fill="none" stroke="#222" stroke-width="2.300"><circle cx="10" cy="10" r="8.500"/><path d="m16 16 7 7"/></svg>
    <span>Search</span>
    <svg width="70" height="38" viewBox="0 0 70 38"><path d="M0 31 8 24h60v7l-8 6H6z" fill="#e9bb7c"/><path d="M0 31h68l-8 6H6z" fill="#cf9146"/><path d="m12 4 19-2v27l-19 3z" fill="#dfe9f8"/><path d="m17 22 4-4 4 4-3 6h-4z" fill="#ee6b3a"/><path d="m20 12 4-6 5 4-2 6h-5z" fill="#2a8aae"/><path d="M40 14h23v17H40z" fill="#e0812b"/><path d="M40 14h23v4H40zM49 18h4v13h-4z" fill="#b75a18"/><path d="M43 5h16v9H43z" fill="#3d88c6"/><path d="M49 3h4v11h-4z" fill="#1e5b94"/><path d="M43 2q5-4 8 2 3-6 8-2-2 4-8 3-5 1-8-3z" fill="#2d6fae"/></svg>
  </div>
  <div class="apps">
    <span><svg viewBox="0 0 36 36"><path d="M0 10h24v24H0z" fill="#2c2c2c"/><path d="M10 1h26v24H10z" fill="#f5f5f5"/><path d="M10 10h14v15H10z" fill="#9a9a9a"/></svg></span>
    <span><svg viewBox="0 0 36 36"><path d="M17 1a17 17 0 1 1-7 32L1 35l2-8A17 17 0 0 1 17 1z" fill="#5f5cc5"/><path d="M8 12h13v13H8zM22 17l6-5v13l-6-5z" fill="#fff"/></svg><em>6</em></span>
    <span class="cur"><svg viewBox="0 0 36 36"><path d="M0 0h36v36H0z" fill="#8165b5"/><path d="M20 0h12v36H20z" fill="#d08a08"/><path d="M12 9h12v27H12z" fill="#efb81c"/><path d="M4 18h12v18H4z" fill="#f9d858"/></svg></span>
    <span><svg viewBox="0 0 36 36"><rect width="36" height="36" rx="6" fill="#292929"/><path d="M8 15v13q0 3 3 1l8-8z" fill="#0f8fd8"/><path d="M8 9q0-3 3-2l17 9q2 2 0 4l-12 8q3-5 0-9L8 11z" fill="#fff"/></svg></span>
    <span><svg viewBox="0 0 36 36"><rect x="2" y="2" width="32" height="32" rx="6" fill="#000"/><text x="5" y="18" font-size="8" font-weight="600" fill="#fff" textLength="25" lengthAdjust="spacingAndGlyphs">GoPro</text><path d="M6 20h5v4H6zM12 20h5v4h-5z" fill="#1a9ae8"/><path d="M18 20h5v4h-5z" fill="#5bb8f0"/><path d="M24 20h6v4h-6z" fill="#fff"/></svg></span>
    <span><svg viewBox="0 0 36 36"><defs><linearGradient id="eg" x2="1" y2="0"><stop stop-color="#1b9de2"/><stop offset=".6" stop-color="#35c1cf"/><stop offset="1" stop-color="#6be35b"/></linearGradient></defs><path d="M1 15C3-3 33-5 36 16c0 8-6 10-13 7 3-4 0-10-6-10-8 0-13 6-12 13z" fill="url(#eg)"/><path d="M1 15c3-7 14-7 17-2-7 3-7 13 0 17 6 3 11 1 15-3C23 42-2 38 1 15z" fill="#1170ca"/><path d="M14 16c-6 7 0 19 12 17 3-1 6-4 7-6-9 4-17-2-19-11z" fill="#0c4fa0"/></svg></span>
    <span><svg viewBox="0 0 36 36"><path d="M0 0h36v36H0z" fill="#fff"/><defs><linearGradient id="ig" x2="1" y2="1"><stop stop-color="#fa4b5c"/><stop offset=".5" stop-color="#b65be0"/><stop offset="1" stop-color="#31b6f2"/></linearGradient></defs><circle cx="18" cy="18" r="16" fill="none" stroke="url(#ig)" stroke-width="2"/><path d="M13 25V10l12-3v15" fill="none" stroke="url(#ig)" stroke-width="3"/><circle cx="11" cy="25" r="3.500" fill="#a45de5"/><circle cx="23" cy="22" r="3.500" fill="#d356b8"/></svg></span>
    <span><svg viewBox="0 0 36 36"><defs><linearGradient id="m1" x2="0" y2="1"><stop stop-color="#c08ae8"/><stop offset="1" stop-color="#3a55b8"/></linearGradient><linearGradient id="m2" x2="1"><stop stop-color="#2a6fd0"/><stop offset="1" stop-color="#55d0f5"/></linearGradient><linearGradient id="m3" x2="1"><stop stop-color="#bf8aec"/><stop offset="1" stop-color="#7b4fa0"/></linearGradient></defs><path d="M15 1 4 8q-2 2-2 5v12l9 3V16q0-5 4-7z" fill="url(#m1)"/><path d="M12 8 15 1q3-1 6 0l11 7q2 2 2 5v12l-10-9q-3-5-8-4z" fill="url(#m2)"/><path d="M34 17v8q0 2-3 4l-10 6q-3 1-6 0L4 28l8-5q10 3 13-7z" fill="url(#m3)"/><circle cx="18" cy="18" r="6" fill="#dadada"/></svg></span>
    <span class="run"><svg viewBox="0 0 36 36"><path d="M0 2h12l4 4v6H0z" fill="#d99b0c"/><path d="M0 8h11l4-3h20q1 0 1 2v27H0z" fill="#fcd253"/><path d="M6 34V27q0-3 3-3h18q3 0 3 3v7z" fill="#1574c9"/><path d="M11 29h14" stroke="#0b519b" stroke-width="2"/></svg></span>
    <span><svg viewBox="0 0 36 36"><circle cx="11" cy="11" r="9" fill="#10a5ea"/><circle cx="25" cy="25" r="9" fill="#10a5ea"/><circle cx="18" cy="18" r="16" fill="#0795dc"/><text x="11.500" y="26.500" font-size="24" font-weight="700" fill="#fff">S</text></svg></span>
    <span><svg viewBox="0 0 36 36"><path d="M0 12 18 0l18 12v22H0z" fill="#0b57a5"/><path d="M4 12h28v14H4z" fill="#f3f3f3"/><path d="m0 12 19 13L36 12v22H0z" fill="#28a8ea"/><path d="m0 34 36-22v22z" fill="#1687d6"/></svg></span>
    <span class="run"><svg viewBox="0 0 36 36"><circle cx="18" cy="18" r="18" fill="#fbc116"/><path d="M18 18 2.400 9A18 18 0 0 1 33.600 9z" fill="#e33b2e"/><path d="M2.400 9A18 18 0 0 0 18 36l8-13-8-5z" fill="#2da94f"/><path d="M18 9h15.600" stroke="#e33b2e" stroke-width="2"/><circle cx="18" cy="18" r="9" fill="#fff"/><circle cx="18" cy="18" r="7" fill="#2b6fe8"/></svg></span>
    <span><svg viewBox="0 0 36 36"><path d="M11 6V2h14v4" fill="none" stroke="#20a5e5" stroke-width="2.500"/><path d="M0 5h36v27q0 4-4 4H4q-4 0-4-4z" fill="#174d84"/><path d="M10 13h7.500v7.500H10z" fill="#f05028"/><path d="M18.500 13H26v7.500h-7.500z" fill="#7eba28"/><path d="M10 21.500h7.500V29H10z" fill="#18a4e8"/><path d="M18.500 21.500H26V29h-7.500z" fill="#fdbb18"/></svg></span>
    <span><svg viewBox="0 0 36 36"><rect y="4" width="36" height="28" rx="2" fill="#3aa5e0"/><path d="M3 7h30v22H3z" fill="#9fdcf8"/><circle cx="13" cy="16" r="8" fill="#1478c0"/><path d="M15 8a8 8 0 0 1 7 8h-7z" fill="#f38a18"/><path d="M25 10h6M25 15h6M25 20h6" stroke="#1478c0" stroke-width="2.500"/><path d="M6 27h12" stroke="#f38a18" stroke-width="2"/><path d="M20 27h11" stroke="#1478c0" stroke-width="2"/></svg></span>
    <span class="run"><svg viewBox="0 0 36 36"><circle cx="18" cy="18" r="18" fill="#1ed760"/><g fill="none" stroke="#111" stroke-linecap="round"><path d="M7 12q12-4 22 2" stroke-width="4"/><path d="M8 19q10-3 19 2" stroke-width="3"/><path d="M9 25q9-2 15 2" stroke-width="2.500"/></g></svg></span>
    <span class="run"><svg viewBox="0 0 36 36"><defs><linearGradient id="pg" x2="1" y2="1"><stop stop-color="#1b66b4"/><stop offset="1" stop-color="#6a48bd"/></linearGradient></defs><rect x="2" y="2" width="32" height="32" rx="4" fill="url(#pg)"/><path d="m3 33 13-19q2-2 4 0l13 19z" fill="#3cc0f2"/><path d="m12 33 8-9q2-1 3 0l9 9z" fill="#1a86d8"/><circle cx="26" cy="8" r="3" fill="#fff"/></svg></span>
    <span class="run"><svg viewBox="0 0 36 36"><rect width="27" height="28" rx="4" fill="#eef0f2"/><path d="M19 5H5v14" fill="none" stroke="#d83b01" stroke-width="4" stroke-dasharray="4 2"/><path d="M20 7v20M8 21h20" stroke="#8a9299" stroke-width="3"/><path d="M19 22v7M21 21h8" stroke="#555c63" stroke-width="2"/><g fill="none" stroke="#1fa0e5" stroke-width="2.500"><circle cx="32" cy="19" r="3.500"/><circle cx="19" cy="32" r="3.500"/></g></svg></span>
  </div>
  <div class="tray">
    <svg width="16" height="10" viewBox="0 0 16 10" fill="none" stroke="#222" stroke-width="1.800"><path d="m1 9 7-7 7 7"/></svg>
    <span class="eng">ENG</span>
    <svg width="26" height="20" viewBox="0 0 26 20" fill="none" stroke="#222" stroke-width="1.600"><path d="M1 7q12-11 24 0M4.500 11q8.500-8 17 0M8 14.500q5-4.500 10 0"/><circle cx="13" cy="17" r="2" fill="#222" stroke="none"/></svg>
    <svg width="26" height="20" viewBox="0 0 26 20" fill="none" stroke="#222" stroke-width="1.600"><path d="M1 7h4l6-5v16l-6-5H1zM14 7q2 3 0 6M17.500 4q5 6 0 12M21 1q7 9 0 18"/></svg>
    <svg width="26" height="20" viewBox="0 0 26 20"><rect x="2" y="5" width="20" height="13" rx="3" fill="none" stroke="#222" stroke-width="1.600"/><path d="M8 7h12v9H5zM23 9h2v5h-2zM4-1 0 9h4l-2 6 8-9H6l2-7z" fill="#111"/></svg>
    <p>8:48 PM<br>6/3/2024</p>
    <svg class="bell" width="24" height="26" viewBox="0 0 24 26"><path d="M0 20 3 15V10q0-7 8-8l8 9v4l3 5zM7 22h8q-4 5-8 0z" fill="#111"/><text x="7" y="15" font-size="11" font-weight="700" fill="#eee">z</text><text x="14" y="10" font-size="14" font-weight="700" fill="#111">z</text></svg>
    <svg class="cop" width="38" height="38" viewBox="0 0 38 38"><defs><linearGradient id="c1" x2="0" y2="1"><stop stop-color="#1d8ff2"/><stop offset=".5" stop-color="#47b579"/><stop offset="1" stop-color="#e8c518"/></linearGradient><linearGradient id="c2" x2="0" y2="1"><stop stop-color="#8f58e8"/><stop offset=".6" stop-color="#e460b0"/><stop offset="1" stop-color="#f89858"/></linearGradient></defs><path d="M12 2h14q3 0 4 4l1 6h-6q-4 0-5 3l-3 9q-2 4-6 4H5q-5 0-4-6L6 6q2-4 6-4z" fill="url(#c1)"/><path d="M18 2h8q3 0 4 4l1 6h-8z" fill="#1650d0"/><path d="M24 12h8q4 0 3 5l-3 12H14q3-1 4-5l2-8q1-4 4-4z" fill="url(#c2)"/><rect x="8" y="27" width="28" height="11" rx="2" fill="#fcc711"/><text x="12.500" y="36" font-size="9.500" font-weight="700" fill="#111" textLength="20">PRE</text></svg>
  </div>
</footer>
</body>
</html>
```
FILE: styles.css
```css
* { box-sizing: border-box; }
body {
  margin: 0; width: 2560px; height: 1440px; overflow: hidden;
  display: flex; flex-direction: column;
  font-family: "Open Sans", "Noto Sans", sans-serif; font-size: 17px; color: #252423;
  background: #f3f2f1;
}
p, h2, h3 { margin: 0; font-weight: 400; }
svg { display: block; flex: none; overflow: visible; }
span, .row, .drop, .trow, p { white-space: nowrap; }
text { font-family: "Open Sans", sans-serif; }
.k { fill: none; stroke: #3b3a39; stroke-width: 1.9; }

/* window title bar */
.titlebar { height: 51px; background: #3b3a39; color: #fff; display: grid; grid-template-columns: 1097px 600px 1fr; flex: none; }
.title-left { display: flex; align-items: center; padding: 3px 0 0 25px; }
.title-left svg { margin-right: 21px; }
.title-left svg:nth-of-type(3) { margin-right: 10px; }
.tl { fill: none; stroke: #eee; stroke-width: 1.5; }
.tl.dim { stroke: #858483; }
.doc { font-size: 17.2px; padding-top: 5px; margin-right: 10px; width: 397px; letter-spacing: -0.02px; }
.top-search { margin-top: 8px; height: 36px; border-radius: 3px; background: #d3d3d1; color: #1b5e50; display: flex; align-items: center; gap: 16px; padding-left: 25px; font-size: 19px; }
.top-search span { padding-top: 1px; }
.title-right { display: flex; align-items: center; justify-content: flex-end; padding: 3px 24px 0 0; }
.title-right > svg:first-of-type { margin: 0 47px 0 16px; }
.user { font-size: 17.5px; letter-spacing: -0.2px; }
.wb { fill: none; stroke: #fff; stroke-width: 1.5; margin-right: 50px; }
.wb:last-child { margin-right: 0; }

/* ribbon tabs */
.tabs { height: 50px; background: #fafafa; display: flex; flex: none; font-size: 19.5px; line-height: 50px; padding-left: 34px; position: relative; color: #252423; }
.tabs > span { height: 47px; }
.w1 { width: 87px; } .w2 { width: 58px; margin-right: 47px; } .w3 { width: 100px; } .w4 { width: 136px; } .w5 { width: 92px; } .w6 { width: 131px; }
.tabs .active { font-weight: 600; color: #000; border-bottom: 5px solid #117865; }
.share { margin: 6px 8px 0 auto; width: 125px; height: 36px; border: 0; border-radius: 5px; background: #117865; color: #fff; display: flex; align-items: center; padding: 0 11px; font: 17px "Open Sans", sans-serif; }
.share span { margin: 0 7px 0 12px; }

.ribbon { height: 139px; background: #fafafa; display: flex; flex: none; padding-top: 4px; position: relative; z-index: 5; box-shadow: 0 2px 8px rgba(0,0,0,.2); font-size: 17px; }
.group { height: 132px; border-right: 1px solid #d2d0ce; display: flex; flex-direction: column; justify-content: space-between; align-items: center; }
.glabel { font-size: 14.6px; line-height: 16px; letter-spacing: -.1px; color: #3b3a39; padding-bottom: 1px; height: 17px; }
.g-clip { width: 240px; } .g-data { width: 550px; } .g-query { width: 173px; } .g-insert { width: 219px; }
.g-calc { width: 171px; } .g-sens { width: 109px; } .g-share { width: 88px; } .g-cop { width: 87px; }
.btns { display: flex; padding-top: 9px; }
.g-insert .btns { padding-right: 3px; }
.g-query .btns { padding-left: 2px; }
.g-calc .btns { padding-left: 1px; }
.btn { display: flex; flex-direction: column; align-items: center; text-align: center; gap: 3px; line-height: 24px; height: 107px; }
.btn i { display: inline-block; width: 7px; height: 7px; border: solid #3b3a39; border-width: 0 2px 2px 0; transform: rotate(45deg) scale(.85); margin: 0 1px 4px 4px; }
.btn.off { color: #c4c3c1; } .btn.off i { border-color: #b3b2b0; }
.w60 { width: 60px; } .w66 { width: 66px; } .w70 { width: 70px; } .w72 { width: 72px; } .w74 { width: 74px; }
.w82 { width: 82px; } .w84 { width: 84px; } .w90 { width: 90px; } .w94 { width: 94px; }
.btn span { letter-spacing: -.2px; }
.clip { display: flex; align-self: stretch; color: #c1c0be; padding: 5px 0 0 20px; }
.paste { width: 45px; padding-top: 4px; display: flex; flex-direction: column; align-items: center; gap: 3px; line-height: 24px; }
.paste svg { margin-left: 5px; }
.paste span { margin-left: -2px; }
.clip-list { display: flex; flex-direction: column; margin-left: 12px; }
.clip-list div { display: flex; height: 36px; gap: 6px; line-height: 28px; letter-spacing: -.1px; }
.g-clip .glabel { margin-top: -12px; }
.collapse { position: absolute; right: 7px; bottom: 10px; }

/* work area */
.work { flex: 1; display: grid; grid-template-columns: 61px 1958px 272px 269px; border-bottom: 1px solid #dcdad8; min-height: 0; }
.rail { border-right: 1px solid #d8d6d4; }
.rail-item { height: 60px; display: flex; align-items: center; justify-content: center; border-left: 4px solid transparent; padding: 0 4px 2px 0; fill: none; stroke: #797775; stroke-width: 1.500; }
.rail-item.on { border-color: #117865; }
.rail-item text { font-size: 12.500px; fill: #797775; stroke: none; font-weight: 600; }
.center { display: grid; grid-template: 1039px 53px / 1909px 49px; }
.stage { background: #fff; position: relative; overflow: hidden; }
/* report page: dashed outline plus the snapping grid */
.page {
  position: absolute; left: 51px; top: -20px; width: 1806px; height: 1036px;
  background:
    repeating-linear-gradient(#605e5c 0 3px, transparent 3px 6px) 0 0 / 3px 100% no-repeat,
    repeating-linear-gradient(#605e5c 0 3px, transparent 3px 6px) 100% 0 / 3px 100% no-repeat,
    repeating-linear-gradient(90deg, #605e5c 0 3px, transparent 3px 6px) 0 100% / 100% 3px no-repeat,
    radial-gradient(circle at 4px 3px, #777 0 .9px, transparent 1.4px) 0 17.800px / 135px 22.500px,
    radial-gradient(circle at 4px 3px, #777 0 .9px, transparent 1.400px) 0 17.800px / 22.500px 135px;
}
.card { position: absolute; left: 116px; top: 65px; width: 427px; height: 405px; background: #e6e6e6; box-shadow: 12px 11px 12px rgba(0,0,0,.28), 0 0 8px rgba(0,0,0,.06); text-align: center; display: flex; flex-direction: column; align-items: center; padding-top: 160px; }
.card b { font: 700 80px/80px Roboto, sans-serif; transform: scaleX(.86); margin-left: 4px; }
.card span { font-size: 21.7px; line-height: 30px; margin-top: 4px; color: #605e5c; letter-spacing: -.22px; }
.scatter { position: absolute; left: 678px; top: 98px; background: #fff; }
.din text { font-family: Roboto, sans-serif; font-weight: 700; fill: #252423; }
.tick text { font-size: 16.500px; fill: #605e5c; letter-spacing: -.4px; }
.note { position: absolute; left: 903px; top: 290px; width: 630px; height: 135px; background: #dfefff; box-shadow: 12px 11px 12px rgba(0,0,0,.28), 0 0 8px rgba(0,0,0,.06); padding: 10px 8px; font-size: 18px; line-height: 25.2px; display: flex; }
.note p { width: 604px; letter-spacing: -.14px; flex: none; }
.thumb { width: 12px; height: 116px; background: #c8c8c8; margin-top: -3px; flex: none; }
.filters { background: #fff; border-left: 1px solid #a6a4a2; display: flex; flex-direction: column; align-items: center; padding: 19px 1px 0 0; }
.chev { fill: none; stroke: #252423; stroke-width: 1.600; }
.funnel { margin: 23px 0 12px 5px; }
.filters span { writing-mode: vertical-rl; font-weight: 600; font-size: 19.500px; line-height: 24px; margin-right: 4px; }
.pagebar { grid-column: 1 / 3; display: flex; background: #f3f2f1; }
.views { width: 192px; display: flex; align-items: center; padding: 0 11px 0 14px; fill: none; stroke: #444; stroke-width: 1.800; border-right: 1px solid #b3b0ad; }
.views svg:first-child { height: 43px; border-bottom: 4px solid #117865; width: 36px; padding: 0 3px 6px; margin-top: -3px; }
.views svg:nth-child(2) { margin: -9px 31px 0 38px; }
.tri { border: 5px solid transparent; border-width: 6px 7px; height: 0; margin-top: -2px; }
.tri.l { border-right-color: #c8c6c4; border-left: 0; margin-right: 25px; } .tri.r { border-left-color: #c8c6c4; border-right: 0; }
.pt { background: #fff; border-right: 1px solid #c8c6c4; text-align: center; line-height: 56px; font-size: 17px; letter-spacing: -.1px; }
.p1 { width: 182px; } .p2 { width: 129px; } .p3 { width: 141px; } .p4 { width: 147px; } .p5 { width: 126px; font-weight: 600; border-bottom: 6px solid #117865; }
.plus { width: 59px; background: #117865; display: flex; align-items: center; justify-content: center; padding-bottom: 2px; }

/* visualizations pane */
.viz { border-left: 1px solid #dcdad8; border-right: 1px solid #dcdad8; }
.phead { display: flex; justify-content: space-between; align-items: center; height: 58px; padding: 0 11px 0 12px; }
h2 { font-size: 22.2px; font-weight: 600; letter-spacing: -.1px; }
h3 { font-size: 17px; font-weight: 600; line-height: 24px; margin: -1px 0 1px 12px; letter-spacing: -.15px; }
.modes { display: flex; gap: 57px; padding: 4px 0 0 12px; align-items: center; }
.mode { width: 48px; height: 48px; border-radius: 4px; background: #d2d0ce; display: flex; align-items: center; justify-content: center; }
.notch { margin-top: 6px; }
.vgrid { display: grid; grid-template-columns: repeat(6, 28px); grid-auto-rows: 28px; gap: 14px; padding: 16px 0 0 16px; height: 351px; border-bottom: 1px solid #dcdad8; }
.vgrid svg { width: 28px; height: 28px; }
.vgrid text { fill: #1f84c8; }
.dots { font-size: 25px; line-height: 6px; letter-spacing: 2.5px; font-weight: 400; margin-left: 1px; }
.w { fill: #fafafa; stroke: #3b3a39; stroke-width: 1.500; }
.b { fill: #83beec; stroke: #0063b1; stroke-width: 1.500; }
.g { fill: #c8c6c4; stroke: #797775; stroke-width: 1.500; }
.x { fill: none; stroke: #3b3a39; stroke-width: 1.600; }
.bl { fill: none; stroke: #1f84c8; stroke-width: 1.500; }
.o { fill: #fdd36a; stroke: #d9720b; stroke-width: 1.300; }
.wells { padding: 14px 9px 0 6px; letter-spacing: -.05px; }
.wl { margin-left: 12px; line-height: 24px; }
.wl.strong { font-weight: 600; color: #484644; margin-top: 16px; }
.drop { border: 1px dashed #c2c0be; border-radius: 3px; background: #fff; }
.d1 { height: 42px; line-height: 38px; padding-left: 15px; margin-top: 8px; }
.d2 { height: 38px; line-height: 36px; padding-left: 12px; margin-top: 9px; letter-spacing: .1px; }
.trow { display: flex; justify-content: space-between; align-items: center; height: 40px; padding: 0 24px 0 12px; }
.wl.strong + .trow { margin-top: 4px; }
.toggle { width: 48px; height: 24px; border: 1px solid #797775; border-radius: 12px; background: #fff; font-size: 14px; color: #605e5c; display: flex; align-items: center; justify-content: space-between; padding: 0 5px 0 6px; letter-spacing: -.3px; }
.toggle i { width: 12px; height: 12px; border-radius: 50%; background: #605e5c; }
.toggle.on { background: #117865; border-color: #117865; color: #fff; } .toggle.on i { background: #fff; }

/* data pane */
.data .phead { padding: 0 10px 0 12px; }
.dsearch { margin: 10px 5px 0 6px; height: 39px; border: 1px solid #797775; border-radius: 3px; display: flex; align-items: center; gap: 9px; padding-left: 12px; font-size: 19px; color: #605e5c; }
.dsearch svg { margin-top: -4px; }
.dsearch span { padding-top: 2px; }
.defs { position: absolute; }
.tree { padding-top: 14px; }
.row { height: 36px; display: flex; align-items: center; padding-left: 25px; letter-spacing: -.05px; color: #3b3a39; font-size: 17px; }
.car { width: 10px; height: 18px; margin-right: 9px; fill: none; stroke: #484644; stroke-width: 1.300; }
.car.open { width: 18px; height: 10px; margin: 0 5px 0 -4px; }
.ic { width: 20px; height: 20px; margin-right: 7px; fill: none; stroke: #252423; stroke-width: 1.600; }
.row.f { padding-left: 66px; }
.row.f.x2 { padding-left: 47px; }
.cb { width: 18px; height: 18px; border: 1.500px solid #797775; border-radius: 3px; margin-right: 12px; flex: none; }

/* status bar */
.status { height: 34px; flex: none; display: flex; justify-content: space-between; align-items: center; padding: 3px 24px 0 6px; font-size: 17px; color: #484644; letter-spacing: -.15px; }
.zoom { display: flex; align-items: center; color: #605e5c; }
.zoom span { margin: -2px 30px 0 17px; }
.zoom svg { margin-top: -3px; }

/* taskbar */
.taskbar { height: 73px; flex: none; border-top: 1px solid #000; box-shadow: inset 0 2px 0 #aaa; background: #d9d9d9; display: flex; align-items: center; position: relative; font-size: 17px; color: #1b1b1b; }
.weather { display: flex; width: 520px; gap: 14px; padding-left: 33px; align-items: center; line-height: 24px; letter-spacing: .1px; }
.weather span { color: #555; }
.start { margin-right: 20px; }
.tsearch { width: 328px; height: 48px; border-radius: 24px; background: #f4f4f4; border: 2px solid #cfcfcf; border-bottom-color: #b5b5b5; display: flex; align-items: center; padding: 0 4px 0 14px; font-size: 19px; color: #555; }
.tsearch span { margin-left: 14px; margin-right: auto; }
.apps { display: flex; margin-left: 4px; }
.apps > span { width: 66px; height: 72px; display: flex; align-items: center; justify-content: center; position: relative; }
.apps svg { width: 36px; height: 36px; }
.apps .cur::before { content: ""; position: absolute; left: 5px; top: 8px; width: 56px; height: 57px; border-radius: 6px; background: #ededed; box-shadow: 0 1px 1px #bbb; }
.apps .cur svg { position: relative; }
.apps .cur::after, .apps .run::after { content: ""; position: absolute; left: 28px; top: 60px; width: 9px; height: 5px; border-radius: 3px; background: #7d7d7d; }
.apps .cur::after { left: 21px; width: 24px; background: #8165b5; }
.apps em { position: absolute; left: 35px; top: 11px; width: 24px; height: 24px; border-radius: 50%; background: #7466b4; color: #fff; font: 15px/24px "Open Sans", sans-serif; text-align: center; }
.tray { margin-left: auto; display: flex; align-items: center; padding-right: 29px; }
.eng { margin: 0 28px 0 32px; font-size: 17px; letter-spacing: -.2px; }
.tray > svg:nth-of-type(2), .tray > svg:nth-of-type(3) { margin-right: 10px; }
.tray p { text-align: right; line-height: 24px; width: 98px; font-size: 17px; letter-spacing: -.05px; }
.bell { margin: 0 21px 0 11px; }
```
